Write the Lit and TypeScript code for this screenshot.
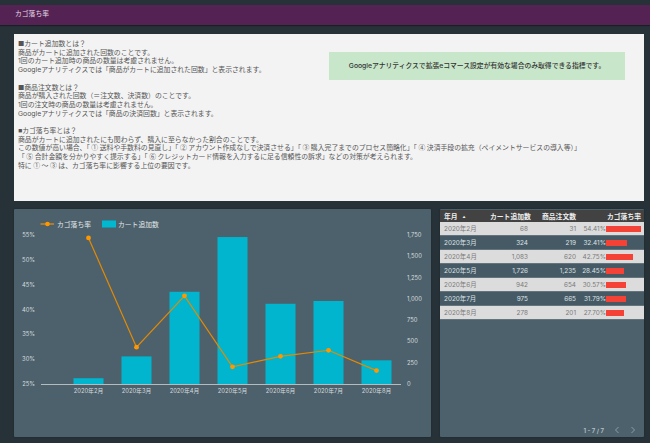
import { LitElement, html, svg, css } from 'lit';
import { customElement } from 'lit/decorators.js';

const FONT = `"Inter", "Noto Sans CJK JP", sans-serif`;

const rows = [
  { month: '2020年2月', cart: 68, orders: 31, rate: 54.41 },
  { month: '2020年3月', cart: 324, orders: 219, rate: 32.41 },
  { month: '2020年4月', cart: 1083, orders: 620, rate: 42.75 },
  { month: '2020年5月', cart: 1726, orders: 1235, rate: 28.45 },
  { month: '2020年6月', cart: 942, orders: 654, rate: 30.57 },
  { month: '2020年7月', cart: 975, orders: 665, rate: 31.79 },
  { month: '2020年8月', cart: 278, orders: 201, rate: 27.7 },
];

const BASE = 175;
const HEIGHT = 149;
const rateY = (r: number) => BASE - ((r - 25) / 30) * HEIGHT;
const cartY = (c: number) => BASE - (c / 1750) * HEIGHT;
const monthX = (i: number) => 74.5 + i * 48;

@customElement('app-root')
export class AppRoot extends LitElement {
  static styles = css`
    :host {
      display: block;
      width: 650px;
      height: 443px;
      overflow: hidden;
      background: #263238;
      font-family: "Inter", "Noto Sans CJK JP", sans-serif;
    }
    .page {
      padding-top: 5px;
    }
    .title {
      height: 20px;
      background: #542354;
      color: #e6dce6;
      font-size: 6.8px;
      line-height: 18px;
      padding-left: 15px;
      box-shadow: 0 1px 1px rgba(0, 0, 0, 0.35);
    }
    .info {
      height: 167px;
      margin: 9px 6px 0 14px;
      background: #f3f3f3;
      box-sizing: border-box;
      padding: 6px 19px 0 4px;
    }
    .upper {
      display: flex;
      justify-content: space-between;
      align-items: flex-start;
    }
    .copy {
      margin: 0;
      font-size: 6.85px;
      line-height: 8.7px;
      color: #555;
      white-space: pre;
    }
    /* Inter's own circled digits are too big, so this block falls through to the CJK ones */
    .copy.marks {
      font-family: "Liberation Sans", "Noto Sans CJK JP", sans-serif;
    }
    .mark {
      padding: 0 1.5px;
    }
    .note {
      width: 296px;
      height: 28px;
      margin-top: 12px;
      background: #c8e6c9;
      color: #333;
      font-size: 6.8px;
      font-weight: 500;
      line-height: 27px;
      text-align: center;
    }
    .bottom {
      display: flex;
      gap: 9px;
      margin: 8px 6px 0 14px;
    }
    .chart,
    .table {
      height: 228px;
      background: #4d616c;
      border-radius: 1px;
      box-shadow: 0 0 2px rgba(0, 0, 0, 0.3);
    }
    .chart {
      width: 417px;
    }
    .chart svg {
      display: block;
    }
    .table {
      width: 204px;
      position: relative;
      box-sizing: border-box;
      padding-top: 1px;
      font-size: 6.4px;
    }
    .row {
      display: grid;
      grid-template-columns: 50px 38px 48px 68px;
      height: 14px;
      align-items: center;
      border-bottom: 1px solid #64747d;
      box-sizing: border-box;
      color: #dde2e5;
      background: #465a65;
    }
    .row.light {
      background: #dcdcdc;
      color: #7a7a7a;
    }
    .row.head {
      height: 12px;
      background: #424242;
      color: #eee;
      font-weight: 600;
      font-size: 6.8px;
      border-bottom: 0;
    }
    .row > span {
      white-space: nowrap;
    }
    .month {
      padding-left: 4px;
    }
    .num {
      text-align: right;
    }
    .num.last {
      padding-right: 3px;
    }
    .rate {
      display: flex;
      align-items: center;
      justify-content: flex-end;
      padding-right: 3px;
    }
    .bar-cell {
      flex: none;
      width: 35px;
      height: 6px;
    }
    .bar {
      height: 100%;
      background: #f44336;
    }
    .sort {
      display: inline-block;
      margin-left: 5px;
      font-size: 3px;
      vertical-align: middle;
    }
    .pager {
      position: absolute;
      right: 8px;
      bottom: 3px;
      display: flex;
      align-items: center;
      gap: 10px;
      color: #b6c2c8;
      font-size: 6px;
      font-weight: 600;
    }
    .pager svg {
      display: block;
    }
  `;

  private renderChart() {
    const line = rows.map((r, i) => `${monthX(i)},${rateY(r.rate)}`).join(' ');
    return html`
      <svg width="417" height="228" viewBox="0 0 417 228" font-family=${FONT} aria-label="カゴ落ち率とカート追加数">
        <line x1="26.5" x2="40" y1="15" y2="15" stroke="#f09000" stroke-width="1.2" />
        <circle cx="33.5" cy="15" r="2.3" fill="#ff9800" />
        <text x="43" y="17.5" font-size="6.8" fill="#e3e8ea">カゴ落ち率</text>
        <rect x="88" y="11.5" width="14" height="7" fill="#00b8d0" />
        <text x="104" y="17.5" font-size="6.8" fill="#e3e8ea">カート追加数</text>
        ${[25, 30, 35, 40, 45, 50, 55].map(
          (v) => svg`<text x="21" y=${rateY(v) + 2} text-anchor="end" font-size="5.8" fill="#d5dcdf">${v}%</text>`
        )}
        ${[0, 250, 500, 750, 1000, 1250, 1500, 1750].map(
          (v) => svg`<text x="393" y=${cartY(v) + 2} font-size="5.8" fill="#d5dcdf">${v.toLocaleString('en-US')}</text>`
        )}
        ${rows.map(
          (r, i) => svg`
            <rect x=${monthX(i) - 15} y=${cartY(r.cart)} width="30" height=${BASE - cartY(r.cart)} fill="#00b5cd" />
            <text x=${monthX(i)} y="184" text-anchor="middle" font-size="5.8" fill="#d5dcdf">${r.month}</text>
          `
        )}
        <line x1="27" x2="387" y1="175.5" y2="175.5" stroke="#b4bcc0" stroke-width="1" />
        <polyline points=${line} fill="none" stroke="#e68a00" stroke-width="1.2" />
        ${rows.map((r, i) => svg`<circle cx=${monthX(i)} cy=${rateY(r.rate)} r="2.4" fill="#ff9800" />`)}
      </svg>
    `;
  }

  private renderTable() {
    const max = Math.max(...rows.map((r) => r.rate));
    return html`
      <div class="row head">
        <span class="month">年月<span class="sort">▲</span></span>
        <span class="num">カート追加数</span>
        <span class="num">商品注文数</span>
        <span class="num last">カゴ落ち率</span>
      </div>
      ${rows.map(
        (r, i) => html`
          <div class="row ${i % 2 === 0 ? 'light' : ''}">
            <span class="month">${r.month}</span>
            <span class="num">${r.cart.toLocaleString('en-US')}</span>
            <span class="num">${r.orders.toLocaleString('en-US')}</span>
            <span class="rate">
              <span>${r.rate.toFixed(2)}%</span>
              <span class="bar-cell"><div class="bar" style="width:${(r.rate / max) * 100}%"></div></span>
            </span>
          </div>
        `
      )}
      <div class="pager">
        <span>1 - 7 / 7</span>
        <svg width="6" height="8" viewBox="0 0 6 8"><path d="M4.5 1 1.5 4l3 3" fill="none" stroke="#8b9ba4" stroke-width="1" /></svg>
        <svg width="6" height="8" viewBox="0 0 6 8"><path d="M1.5 1l3 3-3 3" fill="none" stroke="#8b9ba4" stroke-width="1" /></svg>
      </div>
    `;
  }

  render() {
    return html`
      <div class="page">
        <div class="title">カゴ落ち率</div>
        <div class="info">
          <div class="upper">
            <p class="copy">■カート追加数とは？
商品がカートに追加された回数のことです。
1回のカート追加時の商品の数量は考慮されません。
Googleアナリティクスでは「商品がカートに追加された回数」と表示されます。

■商品注文数とは？
商品が購入された回数（＝注文数、決済数）のことです。
1回の注文時の商品の数量は考慮されません。
Googleアナリティクスでは「商品の決済回数」と表示されます。

</p>
            <div class="note">Googleアナリティクスで拡張eコマース設定が有効な場合のみ取得できる指標です。</div>
          </div>
          <p class="copy marks">■カゴ落ち率とは？
商品がカートに追加されたにも関わらず、購入に至らなかった割合のことです。
この数値が高い場合、「<span class="mark">①</span>送料や手数料の見直し」「<span class="mark">②</span>アカウント作成なしで決済させる」「<span class="mark">③</span>購入完了までのプロセス簡略化」「<span class="mark">④</span>決済手段の拡充（ペイメントサービスの導入等）」
「<span class="mark">⑤</span>合計金額を分かりやすく提示する」「<span class="mark">⑥</span>クレジットカード情報を入力するに足る信頼性の訴求」などの対策が考えられます。
特に<span class="mark">①</span>～<span class="mark">③</span>は、カゴ落ち率に影響する上位の要因です。</p>
        </div>
        <div class="bottom">
          <div class="chart">${this.renderChart()}</div>
          <div class="table">${this.renderTable()}</div>
        </div>
      </div>
    `;
  }
}
